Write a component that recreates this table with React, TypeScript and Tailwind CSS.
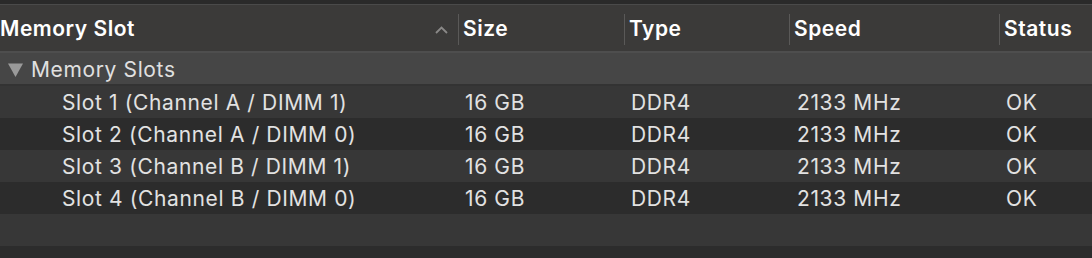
const rows = [
  { name: "Slot 1 (Channel A / DIMM 1)", size: "16 GB", type: "DDR4", speed: "2133 MHz", status: "OK" },
  { name: "Slot 2 (Channel A / DIMM 0)", size: "16 GB", type: "DDR4", speed: "2133 MHz", status: "OK" },
  { name: "Slot 3 (Channel B / DIMM 1)", size: "16 GB", type: "DDR4", speed: "2133 MHz", status: "OK" },
  { name: "Slot 4 (Channel B / DIMM 0)", size: "16 GB", type: "DDR4", speed: "2133 MHz", status: "OK" },
]

const cols = "grid grid-cols-[458px_166px_165px_210px_1fr]"

function HeaderCell({ label }: { label: string }) {
  return (
    <div className="relative flex items-center h-full">
      <div className="absolute left-0 top-[7px] bottom-[6px] w-px bg-[#5a5958]" />
      <span className="pl-[5px]">{label}</span>
    </div>
  )
}

export default function App() {
  return (
    <div
      className="w-[1092px] h-[258px] bg-[#2c2c2c] overflow-hidden text-[#e2e2e2]"
      style={{ fontFamily: "Inter, 'Noto Sans', sans-serif" }}
    >
      <div className="h-[5px] bg-[#2a2a2a] border-b border-[#4a4a4a]" />
      {/* header */}
      <div className={`${cols} h-[48px] pt-[2px] bg-[#3b3a39] border-b-2 border-[#4e4e4e] text-white font-semibold text-[21px] tracking-[0.025em]`}>
        <div className="flex items-center justify-between pr-[10px]">
          <span>Memory Slot</span>
          <svg width="13" height="8" viewBox="0 0 13 8" className="mt-[1px]">
            <path d="M1 7 L6.5 1.5 L12 7" fill="none" stroke="#8a8988" strokeWidth="1.8" />
          </svg>
        </div>
        <HeaderCell label="Size" />
        <HeaderCell label="Type" />
        <HeaderCell label="Speed" />
        <HeaderCell label="Status" />
      </div>
      {/* group */}
      <div className="h-[33px] pt-[2px] bg-[#464646] border-b-2 border-[#333] flex items-center text-[21px] tracking-[0.03em] text-[#e0e0e0]">
        <svg width="15" height="14" viewBox="0 0 15 14" className="ml-[8px] mr-[8px]">
          <path d="M0 0.5 H15 L7.5 14 Z" fill="#9a9a9a" />
        </svg>
        <span>Memory Slots</span>
      </div>
      {/* data rows */}
      {rows.map((r, i) => (
        <div
          key={r.name}
          className={`${cols} h-[32px] pt-[1px] items-center text-[21px] tracking-[0.03em] ${i % 2 === 0 ? "bg-[#373737]" : "bg-[#2c2c2c]"}`}
        >
          <span className="pl-[62px]">{r.name}</span>
          <span className="pl-[7px]">{r.size}</span>
          <span className="pl-[7px]">{r.type}</span>
          <span className="pl-[8px]">{r.speed}</span>
          <span className="pl-[7px]">{r.status}</span>
        </div>
      ))}
      <div className="h-[32px] bg-[#373737]" />
      <div className="h-[12px] bg-[#2c2c2c]" />
    </div>
  )
}
